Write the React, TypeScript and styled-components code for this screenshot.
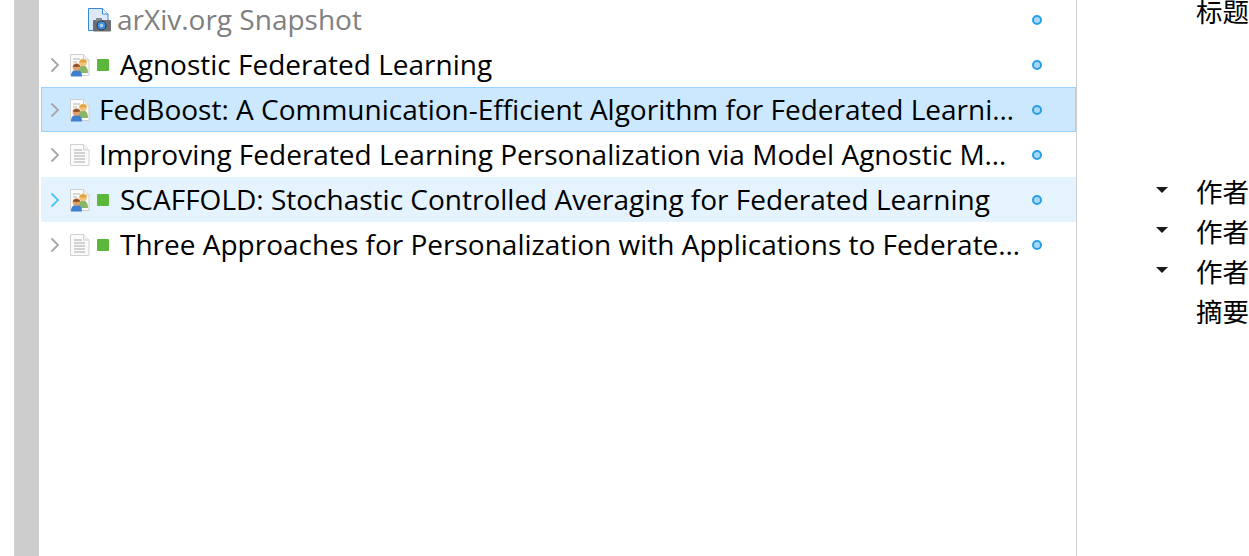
import React from "react";
import styled, { createGlobalStyle } from "styled-components";

type RowState = "normal" | "selected" | "hover";
type IconKind = "article" | "note" | "snapshot";

interface Item {
  title: string;
  icon: IconKind;
  state?: RowState;
  tagged?: boolean;
  child?: boolean;
}

const items: Item[] = [
  { title: "arXiv.org Snapshot", icon: "snapshot", child: true },
  { title: "Agnostic Federated Learning", icon: "article", tagged: true },
  {
    title: "FedBoost: A Communication-Efficient Algorithm for Federated Learning",
    icon: "article",
    state: "selected",
  },
  {
    title: "Improving Federated Learning Personalization via Model Agnostic Meta Learning",
    icon: "note",
  },
  {
    title: "SCAFFOLD: Stochastic Controlled Averaging for Federated Learning",
    icon: "article",
    state: "hover",
    tagged: true,
  },
  {
    title: "Three Approaches for Personalization with Applications to Federated Learning",
    icon: "note",
    tagged: true,
  },
];

const ArticleIcon = () => (
  <svg width="22" height="24" viewBox="0 0 22 24">
    <path d="M1.500 1.500h13l5.500 5.500v15.500h-18.500z" fill="#fbfbfb" stroke="#cfcfcf" />
    <path d="M14.500 1.500v5.500h5.500" fill="#eeeeee" stroke="#cfcfcf" />
    <path d="M4 6h7M4 9h4" stroke="#b5b5b5" />
    <path d="M9 20c0-5 2-7.500 5-7.500s5 2.500 5 7.500z" fill="#86b865" />
    <circle cx="14" cy="9.500" r="3.800" fill="#f0c27a" />
    <path d="M10.200 9c.5-3.500 7-3.500 7.600 0-2 .8-5.500.8-7.600 0z" fill="#e3a23c" />
    <path d="M2 23.500c0-4.500 2-6.500 5.500-6.500s5.500 2 5.500 6.500z" fill="#3f7fd0" />
    <circle cx="7.500" cy="14" r="3.800" fill="#e2a06a" />
    <path d="M3.700 13.500c.5-3.500 7-3.500 7.600 0-2 .6-5.500.6-7.600 0z" fill="#8a4f26" />
  </svg>
);

const NoteIcon = () => (
  <svg width="22" height="24" viewBox="0 0 22 24">
    <path d="M1.500 1.500h13l5.500 5.500v15.500h-18.500z" fill="#fbfbfb" stroke="#d2d2d2" />
    <path d="M14.500 1.500v5.500h5.500" fill="#f0f0f0" stroke="#d2d2d2" />
    <path d="M5 7h8M5 10h11M5 13h11M5 16h11M5 19h11" stroke="#a8a8a8" />
  </svg>
);

const SnapshotIcon = () => (
  <svg width="24" height="25" viewBox="0 0 24 25">
    <path d="M1.500 1.500h14l5.500 5.500v16.500h-19.500z" fill="#dbe9fa" stroke="#3c86d8" />
    <path d="M15.500 1.500v5.500h5.500" fill="#f4f8fe" stroke="#3c86d8" />
    <rect x="6" y="13" width="18" height="11.500" rx="1" fill="#6b6f75" />
    <rect x="9" y="11" width="6" height="3" fill="#85898f" />
    <circle cx="14.500" cy="18.500" r="4.500" fill="#3f8fe0" stroke="#2f3338" />
    <circle cx="14.500" cy="18.500" r="1.800" fill="#a9d2f7" />
  </svg>
);

const icons: Record<IconKind, React.FC> = {
  article: ArticleIcon,
  note: NoteIcon,
  snapshot: SnapshotIcon,
};

const Chevron = ({ color }: { color: string }) => (
  <svg width="10" height="16" viewBox="0 0 10 16">
    <path d="M1.500 1.500L8 8l-6.500 6.500" fill="none" stroke={color} strokeWidth="1.800" />
  </svg>
);

const Row = ({ item }: { item: Item }) => {
  const Icon = icons[item.icon];
  return (
    <ListRow $state={item.state ?? "normal"}>
      <Cell>
        {item.child ? (
          <ChildIndent />
        ) : (
          <Twisty>
            <Chevron color={item.state === "hover" ? "#4fc3f7" : "#a6a6a6"} />
          </Twisty>
        )}
        <IconSlot>
          <Icon />
        </IconSlot>
        {item.tagged && <TagSquare />}
        <Title $muted={item.child}>{item.title}</Title>
      </Cell>
      <DotColumn>
        <AttachDot />
      </DotColumn>
    </ListRow>
  );
};

export default function App() {
  return (
    <>
      <GlobalStyle />
      <Page>
        <Gutter />
        <List>
          {items.map((item) => (
            <Row key={item.title} item={item} />
          ))}
        </List>
        <Details>
          <Field>
            <FieldLabel>标题</FieldLabel>
          </Field>
          <AuthorGroup>
            {[0, 1, 2].map((n) => (
              <Field key={n}>
                <Caret />
                <FieldLabel>作者</FieldLabel>
              </Field>
            ))}
            <Field>
              <FieldLabel>摘要</FieldLabel>
            </Field>
          </AuthorGroup>
        </Details>
      </Page>
    </>
  );
}

const GlobalStyle = createGlobalStyle`
  html, body {
    margin: 0;
    padding: 0;
    height: 100%;
    overflow: hidden;
    background: #fff;
  }
  #root {
    height: 100%;
  }
`;

const Page = styled.div`
  display: flex;
  width: 1249px;
  height: 556px;
  overflow: hidden;
  background: #fff;
  color: #000;
  font-family: "Open Sans", "Noto Sans CJK SC", sans-serif;
`;

const Gutter = styled.div`
  flex: none;
  width: 25px;
  margin-left: 14px;
  background: #cdcdcd;
`;

const List = styled.div`
  flex: none;
  box-sizing: border-box;
  width: 1038px;
  margin-top: -3px;
  border-right: 1px solid #d0d0d0;
  padding-left: 2px;
`;

const rowColors = {
  normal: "background: transparent; border-color: transparent;",
  selected: "background: #cce8ff; border-color: #99d1ff;",
  hover: "background: #e5f3ff; border-color: #e5f3ff;",
};

const ListRow = styled.div<{ $state: RowState }>`
  display: flex;
  align-items: center;
  box-sizing: border-box;
  height: 45px;
  border: 1px solid transparent;
  ${({ $state }) => rowColors[$state]}
`;

const Cell = styled.div`
  display: flex;
  flex: 1;
  align-items: center;
  min-width: 0;
`;

const Twisty = styled.span`
  display: flex;
  flex: none;
  justify-content: center;
  width: 25px;
`;

const ChildIndent = styled.span`
  flex: none;
  width: 43px;
`;

const IconSlot = styled.span`
  display: flex;
  flex: none;
  width: 30px;
  margin-left: 2px;
`;

const TagSquare = styled.span`
  flex: none;
  width: 12px;
  height: 12px;
  margin-right: 11px;
  margin-left: -2px;
  border-radius: 1px;
  background: #5bb83c;
`;

const Title = styled.span<{ $muted?: boolean }>`
  overflow: hidden;
  margin-top: -2px;
  font-size: 28px;
  line-height: 40px;
  white-space: nowrap;
  text-overflow: ellipsis;
  color: ${({ $muted }) => ($muted ? "#808080" : "#000")};
`;

const DotColumn = styled.div`
  display: flex;
  flex: none;
  justify-content: center;
  box-sizing: border-box;
  width: 54px;
  padding-right: 22px;
`;

const AttachDot = styled.span`
  box-sizing: border-box;
  width: 10px;
  height: 10px;
  border: 2px solid #27a0e8;
  border-radius: 50%;
  background: #a9d8f7;
`;

const Details = styled.div`
  flex: 1;
  min-width: 0;
  margin-top: -9px;
  overflow: hidden;
`;

const AuthorGroup = styled.div`
  margin-top: 140px;
`;

const Field = styled.div`
  position: relative;
  display: flex;
  align-items: center;
  height: 40px;
  padding-left: 119px;
`;

const Caret = styled.span`
  position: absolute;
  top: 16px;
  left: 79px;
  width: 0;
  height: 0;
  border-top: 6px solid #1a1a1a;
  border-right: 6px solid transparent;
  border-left: 6px solid transparent;
`;

const FieldLabel = styled.span`
  font-family: "Noto Sans CJK SC", sans-serif;
  font-size: 26.500px;
  line-height: 40px;
  white-space: nowrap;
`;
